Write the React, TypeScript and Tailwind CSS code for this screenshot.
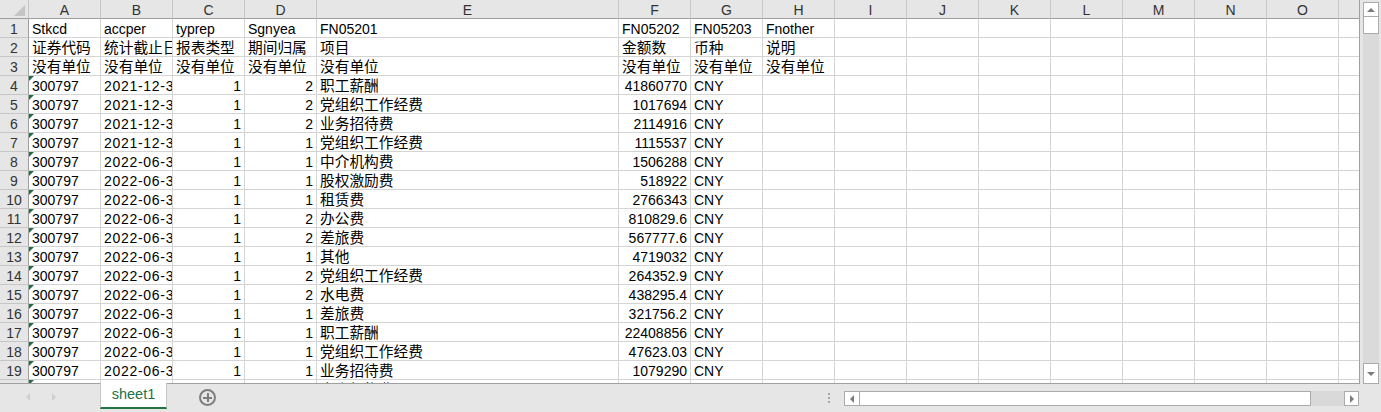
import React from 'react';

const colWidths = [
  'w-[29px]', 'w-[72px]', 'w-[72px]', 'w-[72px]', 'w-[72px]', 'w-[302px]', 'w-[72px]', 'w-[72px]',
  'w-[72px]', 'w-[72px]', 'w-[72px]', 'w-[72px]', 'w-[72px]', 'w-[72px]', 'w-[72px]', 'w-[72px]', 'w-[72px]',
];
const letters = ['A', 'B', 'C', 'D', 'E', 'F', 'G', 'H', 'I', 'J', 'K', 'L', 'M', 'N', 'O', 'P'];

type Cell = { v: string; right?: boolean; flag?: boolean; wide?: boolean };

const headRows: string[][] = [
  ['Stkcd', 'accper', 'typrep', 'Sgnyea', 'FN05201', 'FN05202', 'FN05203', 'Fnother'],
  ['证券代码', '统计截止日期', '报表类型', '期间归属', '项目', '金额数', '币种', '说明'],
  ['没有单位', '没有单位', '没有单位', '没有单位', '没有单位', '没有单位', '没有单位', '没有单位'],
];

const records: [string, number, number, string, string][] = [
  ['2021-12-31', 1, 2, '职工薪酬', '41860770'],
  ['2021-12-31', 1, 2, '党组织工作经费', '1017694'],
  ['2021-12-31', 1, 2, '业务招待费', '2114916'],
  ['2021-12-31', 1, 1, '党组织工作经费', '1115537'],
  ['2022-06-30', 1, 1, '中介机构费', '1506288'],
  ['2022-06-30', 1, 1, '股权激励费', '518922'],
  ['2022-06-30', 1, 1, '租赁费', '2766343'],
  ['2022-06-30', 1, 2, '办公费', '810829.6'],
  ['2022-06-30', 1, 2, '差旅费', '567777.6'],
  ['2022-06-30', 1, 1, '其他', '4719032'],
  ['2022-06-30', 1, 2, '党组织工作经费', '264352.9'],
  ['2022-06-30', 1, 2, '水电费', '438295.4'],
  ['2022-06-30', 1, 1, '差旅费', '321756.2'],
  ['2022-06-30', 1, 1, '职工薪酬', '22408856'],
  ['2022-06-30', 1, 1, '党组织工作经费', '47623.03'],
  ['2022-06-30', 1, 1, '业务招待费', '1079290'],
  ['2022-06-30', 1, 1, '中介机构费', '3021550'],
];

const rows: Cell[][] = [
  ...headRows.map(r => r.map(v => ({ v }))),
  ...records.map(([date, t, s, item, amt]) => [
    { v: '300797', flag: true },
    { v: date, wide: true },
    { v: String(t), right: true },
    { v: String(s), right: true },
    { v: item },
    { v: amt, right: true },
    { v: 'CNY' },
    { v: '' },
  ]),
];

const hasCjk = (s: string) => /[\u4e00-\u9fff]/.test(s);

const GridCell: React.FC<{ cell?: Cell; width: string }> = ({ cell, width }) => (
  <div
    className={`relative ${width} h-[19px] shrink-0 overflow-hidden whitespace-nowrap border-r border-b border-[#d4d4d4] px-[3px] leading-[20px] text-black ${
      cell && hasCjk(cell.v) ? 'text-[14.7px]' : 'text-[14px]'
    } ${cell?.right ? 'text-right' : 'text-left'} ${cell?.wide ? 'tracking-[0.7px]' : ''}`}
  >
    {cell?.flag && (
      <span className="absolute left-0 top-0 h-0 w-0 border-t-[5px] border-r-[5px] border-t-[#1e7145] border-r-transparent" />
    )}
    {cell?.v}
  </div>
);

const ArrowBox: React.FC<{ dir: 'up' | 'down' | 'left' | 'right'; className?: string }> = ({ dir, className }) => (
  <div className={`flex items-center justify-center border border-[#ababab] bg-white ${className ?? ''}`}>
    {dir === 'up' && <span className="h-0 w-0 border-x-[4px] border-b-[4px] border-x-transparent border-b-[#7b7b7b]" />}
    {dir === 'down' && <span className="h-0 w-0 border-x-[4px] border-t-[4px] border-x-transparent border-t-[#7b7b7b]" />}
    {dir === 'left' && <span className="h-0 w-0 border-y-[4px] border-r-[4px] border-y-transparent border-r-[#7b7b7b]" />}
    {dir === 'right' && <span className="h-0 w-0 border-y-[4px] border-l-[4px] border-y-transparent border-l-[#7b7b7b]" />}
  </div>
);

const App: React.FC = () => {
  return (
    <div className="flex h-[412px] w-[1381px] flex-col overflow-hidden bg-[#e6e6e6] font-['Liberation_Sans','Noto_Sans_CJK_SC',sans-serif]">
      <div className="flex h-[384px] shrink-0">
        {/* sheet grid */}
        <div className="h-[384px] w-[1360px] shrink-0 overflow-hidden border-r border-b border-[#a0a0a0] bg-white">
          {/* column letters */}
          <div className="flex">
            <div className="relative h-[19px] w-[29px] shrink-0 border-r border-b border-r-[#c6c6c6] border-b-[#9e9e9e] bg-[#e6e6e6]">
              <span className="absolute right-[3px] bottom-[2px] h-0 w-0 border-l-[11px] border-t-[11px] border-l-transparent border-t-transparent border-r-[11px] border-r-[#c4c4c4]" />
            </div>
            {letters.map((l, i) => (
              <div
                key={l}
                className={`${colWidths[i + 1]} h-[19px] shrink-0 border-r border-b border-r-[#c6c6c6] border-b-[#9e9e9e] bg-[#e6e6e6] text-center text-[14px] leading-[20px] text-[#333]`}
              >
                {l}
              </div>
            ))}
          </div>
          {rows.map((row, r) => (
            <div key={r} className="flex">
              <div className="h-[19px] w-[29px] shrink-0 border-r border-b border-r-[#9e9e9e] border-b-[#c6c6c6] bg-[#e6e6e6] text-center text-[14px] leading-[20px] text-[#333]">
                {r + 1}
              </div>
              {letters.map((l, c) => (
                <GridCell key={l} cell={row[c]} width={colWidths[c + 1]} />
              ))}
            </div>
          ))}
        </div>

        {/* vertical scrollbar */}
        <div className="ml-[3px] flex w-[16px] flex-col pt-[2px]">
          <ArrowBox dir="up" className="h-[15px]" />
          <div className="flex flex-1 flex-col bg-[#dadada]">
            <div className="h-[17px] border border-t-0 border-[#ababab] bg-white" />
          </div>
          <ArrowBox dir="down" className="h-[21px]" />
        </div>
      </div>

      {/* sheet tabs bar */}
      <div className="flex h-[28px] items-start">
        <div className="flex h-[26px] w-[100px] items-center gap-[22px] pl-[26px]">
          <span className="h-0 w-0 border-y-[4px] border-r-[4px] border-y-transparent border-r-[#cfcfcf]" />
          <span className="h-0 w-0 border-y-[4px] border-l-[4px] border-y-transparent border-l-[#cfcfcf]" />
        </div>
        <div className="-mt-px flex h-[26px] w-[67px] items-center justify-center border-x border-b-2 border-x-[#c6c6c6] border-b-[#217346] bg-white text-[14.5px] text-[#217346]">
          sheet1
        </div>
        <div className="ml-[32px] mt-[5px] flex h-[17px] w-[17px] items-center justify-center rounded-full border-2 border-[#7d7d7d]">
          <span className="relative h-[9px] w-[9px]">
            <span className="absolute left-0 top-[3.5px] h-[2px] w-[9px] bg-[#7d7d7d]" />
            <span className="absolute left-[3.5px] top-0 h-[9px] w-[2px] bg-[#7d7d7d]" />
          </span>
        </div>
        <div className="ml-[612px] mt-[9px] flex flex-col gap-[2px]">
          <span className="h-[2px] w-[2px] bg-[#a8a8a8]" />
          <span className="h-[2px] w-[2px] bg-[#a8a8a8]" />
          <span className="h-[2px] w-[2px] bg-[#a8a8a8]" />
        </div>
        <div className="ml-[14px] mt-[7px] flex h-[15px] w-[515px]">
          <ArrowBox dir="left" className="h-[15px] w-[16px]" />
          <div className="h-[15px] w-[451px] border-y border-r border-[#ababab] bg-white" />
          <div className="h-[15px] flex-1 bg-[#d9d9d9]" />
          <ArrowBox dir="right" className="h-[15px] w-[15px]" />
        </div>
      </div>
    </div>
  );
};

export default App;
